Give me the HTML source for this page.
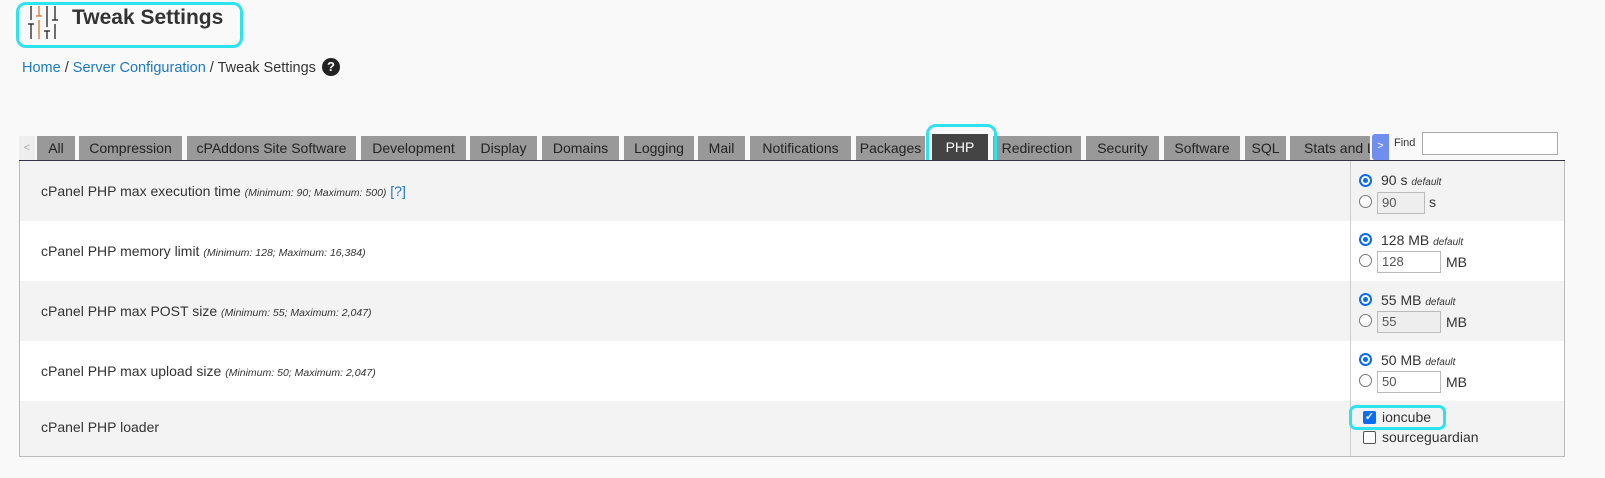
<!DOCTYPE html>
<html><head><style>
*{box-sizing:border-box;margin:0;padding:0}
body{width:1605px;height:478px;background:#f9f9fa;font-family:"Liberation Sans",sans-serif;color:#333;position:relative;overflow:hidden}
.a{position:absolute}
.tab{position:absolute;top:136px;height:24px;background:#999;color:#222;font-size:14px;line-height:24px;text-align:center;white-space:nowrap;overflow:hidden}
.row{position:absolute;left:19px;width:1546px;border-left:1px solid #bbb;border-right:1px solid #bbb}
.lbl{position:absolute;left:21px;font-size:14px;color:#333}
.lbl i{font-size:10.5px;color:#333}
.rc{position:absolute;left:1330px;top:0;bottom:0;border-left:1px solid #ccc}
.rad{position:absolute;width:13px;height:13px;border-radius:50%;border:1px solid #777;background:#fff}
.rad.on{border:2px solid #0a6cf0}
.rad.on:after{content:"";position:absolute;left:2px;top:2px;width:5px;height:5px;border-radius:50%;background:#0a6cf0}
.inp{position:absolute;height:22px;border:1px solid #bbb;font-size:13px;line-height:20px;padding-left:4px;color:#555}
.t13{position:absolute;font-size:14px;color:#333;white-space:nowrap}
.t13 i{font-size:10px}
</style></head><body>
<div class="a" style="left:16px;top:2px;width:227px;height:46px;border:3px solid #2ee3f0;border-radius:10px"></div>
<svg class="a" style="left:28px;top:4px" width="32" height="36">
<g stroke="#222" stroke-width="1.3"><line x1="3" y1="2" x2="3" y2="16"/><line x1="3" y1="20" x2="3" y2="35"/><line x1="0" y1="20" x2="6" y2="20"/>
<line x1="19" y1="2" x2="19" y2="23"/><line x1="19" y1="27" x2="19" y2="35"/><line x1="16" y1="27" x2="22" y2="27"/>
<line x1="27" y1="2" x2="27" y2="16"/><line x1="27" y1="20" x2="27" y2="35"/><line x1="24" y1="16" x2="30" y2="16"/></g>
<g stroke="#e0742c" stroke-width="1.3"><line x1="11" y1="2" x2="11" y2="12"/><line x1="11" y1="16" x2="11" y2="35"/><line x1="8" y1="12" x2="14" y2="12"/></g></svg>
<div class="a" style="left:72px;top:6px;font-size:21px;font-weight:bold;color:#333">Tweak Settings</div>
<div class="a" style="left:22px;top:60px;font-size:14.5px"><span style="color:#1b7ac0">Home</span> / <span style="color:#1b7ac0">Server Configuration</span> / Tweak Settings</div>
<div class="a" style="left:322px;top:58px;width:18px;height:18px;border-radius:50%;background:#222;color:#fff;font-size:13px;font-weight:bold;text-align:center;line-height:18px">?</div>

<div class="tab" style="left:19px;width:16px;background:#eee;color:#aaa;font-size:11px">&lt;</div>
<div class="tab" style="left:37px;width:38px">All</div>
<div class="tab" style="left:79px;width:103px">Compression</div>
<div class="tab" style="left:187px;width:169px">cPAddons Site Software</div>
<div class="tab" style="left:361px;width:105px">Development</div>
<div class="tab" style="left:470px;width:67px">Display</div>
<div class="tab" style="left:542px;width:77px">Domains</div>
<div class="tab" style="left:624px;width:70px">Logging</div>
<div class="tab" style="left:698px;width:47px">Mail</div>
<div class="tab" style="left:750px;width:101px">Notifications</div>
<div class="tab" style="left:856px;width:69px">Packages</div>
<div class="tab" style="left:932px;width:56px;top:134px;height:26px;background:#444;color:#fff;line-height:26px">PHP</div>
<div class="tab" style="left:993px;width:88px">Redirection</div>
<div class="tab" style="left:1086px;width:73px">Security</div>
<div class="tab" style="left:1164px;width:76px">Software</div>
<div class="tab" style="left:1245px;width:41px">SQL</div>
<div class="tab" style="left:1290px;width:80px;text-align:left;padding-left:14px">Stats and Log</div>
<div class="tab" style="left:1372px;width:17px;top:134px;height:26px;background:#6f8ef0;color:#fff;font-size:11px;border-radius:3px 0 0 3px">&gt;</div>
<div class="a" style="left:1394px;top:137px;font-size:11px">Find</div>
<div class="a" style="left:1422px;top:132px;width:136px;height:23px;border:1px solid #aaa;background:#fff"></div>
<div class="a" style="left:926px;top:124px;width:71px;height:46px;border:3px solid #2ee3f0;border-radius:10px"></div>

<div class="a" style="left:19px;top:160px;width:1546px;height:1px;background:#334"></div>
<div class="row" style="top:161px;height:60px;background:#f3f3f3"><div class="lbl" style="top:22px">cPanel PHP max execution time <i>(Minimum: 90; Maximum: 500)</i> <span style="color:#1b7ac0">[?]</span></div><div class="rc"></div></div>
<div class="row" style="top:221px;height:60px;background:#fff"><div class="lbl" style="top:22px">cPanel PHP memory limit <i>(Minimum: 128; Maximum: 16,384)</i></div><div class="rc"></div></div>
<div class="row" style="top:281px;height:60px;background:#f3f3f3"><div class="lbl" style="top:22px">cPanel PHP max POST size <i>(Minimum: 55; Maximum: 2,047)</i></div><div class="rc"></div></div>
<div class="row" style="top:341px;height:60px;background:#fff"><div class="lbl" style="top:22px">cPanel PHP max upload size <i>(Minimum: 50; Maximum: 2,047)</i></div><div class="rc"></div></div>
<div class="row" style="top:401px;height:56px;background:#f3f3f3;border-bottom:1px solid #bbb"><div class="lbl" style="top:18px">cPanel PHP loader</div><div class="rc"></div></div>

<div class="rad on" style="left:1359px;top:174px"></div><div class="t13" style="left:1381px;top:172px">90 s <i>default</i></div>
<div class="rad" style="left:1359px;top:195px"></div><div class="inp" style="left:1377px;top:192px;width:48px;background:#eee">90</div><div class="t13" style="left:1429px;top:194px">s</div>
<div class="rad on" style="left:1359px;top:233px"></div><div class="t13" style="left:1381px;top:232px">128 MB <i>default</i></div>
<div class="rad" style="left:1359px;top:254px"></div><div class="inp" style="left:1377px;top:251px;width:64px;background:#fff">128</div><div class="t13" style="left:1446px;top:254px">MB</div>
<div class="rad on" style="left:1359px;top:293px"></div><div class="t13" style="left:1381px;top:292px">55 MB <i>default</i></div>
<div class="rad" style="left:1359px;top:314px"></div><div class="inp" style="left:1377px;top:311px;width:64px;background:#eee">55</div><div class="t13" style="left:1446px;top:314px">MB</div>
<div class="rad on" style="left:1359px;top:353px"></div><div class="t13" style="left:1381px;top:352px">50 MB <i>default</i></div>
<div class="rad" style="left:1359px;top:374px"></div><div class="inp" style="left:1377px;top:371px;width:64px;background:#fff">50</div><div class="t13" style="left:1446px;top:374px">MB</div>

<div class="a" style="left:1349px;top:405px;width:97px;height:25px;border:3px solid #2ee3f0;border-radius:7px"></div>
<div class="a" style="left:1363px;top:411px;width:13px;height:13px;background:#0a6cf0;border-radius:2px;color:#fff;font-size:11px;line-height:13px;text-align:center;font-weight:bold">✓</div>
<div class="t13" style="left:1382px;top:409px">ioncube</div>
<div class="a" style="left:1363px;top:431px;width:13px;height:13px;border:1px solid #555;border-radius:2px;background:#fff"></div>
<div class="t13" style="left:1382px;top:429px">sourceguardian</div>
</body></html>
